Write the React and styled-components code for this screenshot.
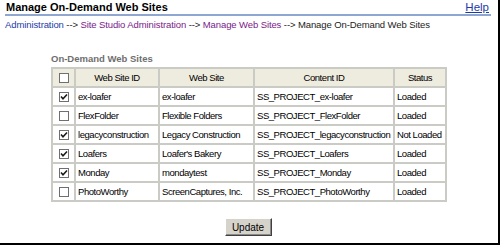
import React from "react";
import styled, { createGlobalStyle } from "styled-components";

const Global = createGlobalStyle`
  body {
    margin: 0;
    background: #fff;
    font-family: "Liberation Sans", Arial, sans-serif;
  }
`;

const Page = styled.div`
  width: 498px;
  height: 243px;
  border-right: 2px solid #000;
  border-bottom: 2px solid #000;
  background: #fff;
  overflow: hidden;
`;

const Header = styled.div`
  display: flex;
  justify-content: space-between;
  align-items: flex-end;
  margin: 0 7px 0 5px;
  padding: 1px 2px 0 1px;
  border-bottom: 2px solid #8fa7d0;
`;

const Title = styled.h1`
  margin: 0;
  font-size: 11px;
  line-height: 13px;
  font-weight: bold;
  color: #000;
`;

const HelpLink = styled.a`
  font-size: 11.5px;
  line-height: 13px;
  color: #1c3aa8;
  text-decoration: underline;
`;

const Crumbs = styled.div`
  margin: 3px 0 0 5px;
  font-size: 9.5px;
  line-height: 11px;
  letter-spacing: -0.1px;
  color: #222;
  white-space: nowrap;
`;

const Crumb = styled.span`
  color: ${(props) => (props.visited ? "#7a1a8c" : "#1c3aa8")};
`;

const Section = styled.div`
  margin: 23px 0 0 51px;
`;

const SectionTitle = styled.div`
  font-size: 9.5px;
  line-height: 11px;
  font-weight: bold;
  color: #6e6e6e;
  margin-bottom: 3px;
`;

const Table = styled.table`
  border-collapse: collapse;
  width: 394px;
  font-size: 9.5px;
  letter-spacing: -0.45px;
  table-layout: fixed;
`;

const Th = styled.th`
  background: #eeecdf;
  font-weight: normal;
  height: 17px;
  padding: 0;
  border: 2px solid #cbcbc6;
  text-align: center;
  color: #000;
`;

const Td = styled.td`
  height: 17px;
  padding: 0 0 0 2px;
  border: 2px solid #cbcbc6;
  text-align: ${(props) => (props.center ? "center" : "left")};
  white-space: nowrap;
  overflow: hidden;
  color: #000;
`;

const Box = styled.span`
  display: inline-flex;
  align-items: center;
  justify-content: center;
  box-sizing: border-box;
  width: 10px;
  height: 10px;
  border: 1px solid #6f6f6f;
  background: #fff;
  vertical-align: middle;
  margin-left: ${(props) => (props.head ? "0" : "-2px")};
`;

const Footer = styled.div`
  display: flex;
  justify-content: center;
  margin-top: 16px;
  width: 394px;
`;

const Button = styled.button`
  font-family: "Liberation Sans", Arial, sans-serif;
  font-size: 10px;
  height: 18px;
  width: 47px;
  padding: 0;
  background: #d6d3cb;
  border: 1px solid;
  border-color: #fff #404040 #404040 #fff;
  box-shadow: inset -1px -1px 0 #8a8a8a;
  color: #000;
`;

function Check({ on, head }) {
  return (
    <Box head={head}>
      {on && (
        <svg width="8" height="8" viewBox="0 0 8 8">
          <path d="M1 3.5 L3 5.8 L7 1.5" stroke="#1a1a1a" strokeWidth="1.6" fill="none" />
        </svg>
      )}
    </Box>
  );
}

const sites = [
  { on: true, id: "ex-loafer", name: "ex-loafer", status: "Loaded" },
  { on: false, id: "FlexFolder", name: "Flexible Folders", status: "Loaded" },
  { on: true, id: "legacyconstruction", name: "Legacy Construction", status: "Not Loaded" },
  { on: true, id: "Loafers", name: "Loafer's Bakery", status: "Loaded" },
  { on: true, id: "Monday", name: "mondaytest", status: "Loaded" },
  { on: false, id: "PhotoWorthy", name: "ScreenCaptures, Inc.", status: "Loaded" },
];

export default function App() {
  return (
    <Page>
      <Global />
      <Header>
        <Title>Manage On-Demand Web Sites</Title>
        <HelpLink>Help</HelpLink>
      </Header>
      <Crumbs>
        <Crumb>Administration</Crumb> --&gt; <Crumb visited>Site Studio Administration</Crumb> --&gt;{" "}
        <Crumb visited>Manage Web Sites</Crumb> --&gt; Manage On-Demand Web Sites
      </Crumbs>
      <Section>
        <SectionTitle>On-Demand Web Sites</SectionTitle>
        <Table>
          <colgroup>
            <col style={{ width: 23 }} />
            <col style={{ width: 84 }} />
            <col style={{ width: 95 }} />
            <col style={{ width: 140 }} />
            <col style={{ width: 52 }} />
          </colgroup>
          <thead>
            <tr>
              <Th><Check on={false} head /></Th>
              <Th>Web Site ID</Th>
              <Th>Web Site</Th>
              <Th>Content ID</Th>
              <Th>Status</Th>
            </tr>
          </thead>
          <tbody>
            {sites.map((s) => (
              <tr key={s.id}>
                <Td center><Check on={s.on} /></Td>
                <Td>{s.id}</Td>
                <Td>{s.name}</Td>
                <Td>SS_PROJECT_{s.id}</Td>
                <Td>{s.status}</Td>
              </tr>
            ))}
          </tbody>
        </Table>
        <Footer>
          <Button>Update</Button>
        </Footer>
      </Section>
    </Page>
  );
}
